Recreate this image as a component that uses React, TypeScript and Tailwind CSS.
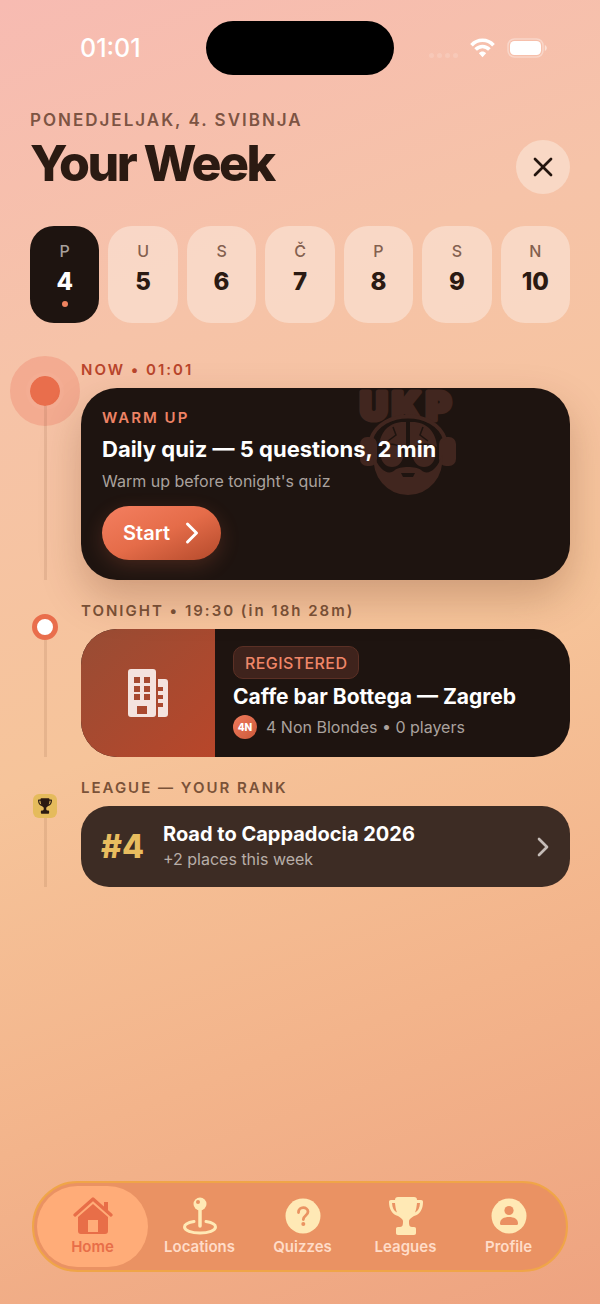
import type { ReactNode } from "react";
import { ChevronRight, X } from "lucide-react";

interface Day {
  letter: string;
  date:   number;
  name:   string;
}

const days: Day[] = [
  { letter: "P", date: 4,  name: "Ponedjeljak" },
  { letter: "U", date: 5,  name: "Utorak" },
  { letter: "S", date: 6,  name: "Srijeda" },
  { letter: "Č", date: 7,  name: "Četvrtak" },
  { letter: "P", date: 8,  name: "Petak" },
  { letter: "S", date: 9,  name: "Subota" },
  { letter: "N", date: 10, name: "Nedjelja" },
];

function StatusBar() {
  return (
    <div className="h-[105px] pt-[21px] grid grid-cols-[1fr_188px_1fr] items-start text-white">
      <div className="h-14 flex items-center pl-20 text-[25px] font-medium">01:01</div>
      <div className="h-[54px] rounded-full bg-black" />
      <div className="h-[54px] flex items-center justify-end gap-3 pr-[53px]">
        <div className="flex gap-[3px] pt-[14px]">
          {[1, 2, 3, 4].map((i) => (
            <span key={i} className="size-[5px] rounded-full bg-white/15" />
          ))}
        </div>
        <svg width="25" height="20" viewBox="0 0 25 20" fill="none" stroke="currentColor" strokeWidth="3.6">
          <path d="M1.5 7.2C7.5 0.6 17.5 0.6 23.5 7.2" />
          <path d="M5.6 11.6C9.5 7.5 15.5 7.5 19.4 11.6" />
          <path d="M8.9 15.2C10.9 13 14.1 13 16.1 15.2L12.5 19.2Z" fill="currentColor" stroke="none" />
        </svg>
        <svg width="40" height="20" viewBox="0 0 40 20" fill="none">
          <rect x="1" y="1" width="35" height="18" rx="6.5" stroke="#fff" strokeOpacity=".35" strokeWidth="1.5" />
          <rect x="3" y="3" width="31" height="14" rx="4.5" fill="#fff" />
          <path d="M37.8 7v6c1.2-.5 2-1.6 2-3s-.8-2.5-2-3Z" fill="#fff" fillOpacity=".5" />
        </svg>
      </div>
    </div>
  );
}

function Mascot() {
  return (
    <svg className="absolute top-0 right-[112px] overflow-visible" width="102" height="109" viewBox="17 13 102 109" fill="#41261f">
      <text
        x="21 53 87" y="45" fontSize="38" fontWeight="900" fontFamily="Inter, sans-serif"
        stroke="#41261f" strokeWidth="5" strokeLinejoin="round"
      >
        UKP
      </text>
      <circle cx="69" cy="76" r="34" fill="#1e1410" />
      <rect x="21" y="62" width="17" height="29" rx="7" />
      <rect x="100" y="62" width="17" height="29" rx="7" />
      <path d="M32 64C42 34 96 34 106 64" fill="none" stroke="#41261f" strokeWidth="4" />
      <path d="M67 47C51 46 41 56 40 72C50 66 60 68 67 76Z" />
      <path d="M71 47C87 46 97 56 98 72C88 66 78 68 71 76Z" />
      <path d="M54 52l3 8-8 6M84 52l-3 8 8 6" fill="none" stroke="#1e1410" strokeWidth="1.5" />
      <path
        fillRule="evenodd"
        d="M35 80C40 96 50 101 56 95C60 91 78 91 82 95C88 101 98 96 103 80A34 35 0 0 1 69 120A34 35 0 0 1 35 80ZM62 98l2 4h10l2-4Z"
      />
      <circle cx="53" cy="81" r="11" />
      <circle cx="85" cy="81" r="11" />
    </svg>
  );
}

function BuildingIcon() {
  return (
    <svg width="40" height="48" viewBox="0 0 40 48" fill="#f4e3de">
      <path
        fillRule="evenodd"
        d="M3 0h22a3 3 0 0 1 3 3v42a3 3 0 0 1-3 3H3a3 3 0 0 1-3-3V3a3 3 0 0 1 3-3ZM6 8v6h6V8ZM16 8v6h6V8ZM6 17v6h6v-6ZM16 17v6h6v-6ZM6 25v6h6v-6ZM16 25v6h6v-6ZM9 37v8h10v-8Z"
      />
      <path d="M30 10h7a3 3 0 0 1 3 3v32a3 3 0 0 1-3 3h-7V38h5v-4h-5v-4h5v-4h-5v-4h5v-4h-5Z" />
    </svg>
  );
}

function TrophyIcon({ className }: { className: string }) {
  return (
    <svg className={className} viewBox="0 0 34 38" fill="currentColor">
      <path
        fillRule="evenodd"
        d="M9 0h16c2 0 3 1 3 3h4c1.500 0 2 .7 2 2 0 7-3 12.500-9 14-2.500 2-5 3-5 5 0 3 0 6 3 6h2c1.500 0 2 .8 2 2v4c0 1-.7 2-2 2H9c-1.300 0-2-1-2-2v-4c0-1.200.5-2 2-2h2c3 0 3-3 3-6 0-2-2.500-3-5-5C3 17.500 0 12 0 5c0-1.300.5-2 2-2h4c0-2 1-3 3-3ZM3 6c.3 4.500 1.700 8 5 9.500C6.700 12.500 6.300 9 6 6ZM28 6c-.3 3-.7 6.500-2 9.500 3.300-1.500 4.700-5 5-9.500Z"
      />
    </svg>
  );
}

function HomeIcon() {
  return (
    <svg width="40" height="38" viewBox="0 0 40 38" fill="currentColor">
      <path d="M31 5h4v12l-4-4Z" />
      <path d="M2 18L20 2l18 16" fill="none" stroke="currentColor" strokeWidth="3.2" strokeLinecap="round" strokeLinejoin="round" />
      <path fillRule="evenodd" d="M20 7l15 13v14c0 2-1 3-3 3H8c-2 0-3-1-3-3V20ZM15 23v12h10V23Z" />
    </svg>
  );
}

function LocationIcon() {
  return (
    <svg width="34" height="38" viewBox="0 0 34 38" fill="none" stroke="currentColor">
      <path d="M11 24.500C5 25.500 1.500 27.500 1.500 30c0 3.500 7 6 15.500 6s15.500-2.500 15.500-6c0-2.500-3.500-4.500-9.500-5.500" strokeWidth="3" strokeLinecap="round" />
      <path d="M17 12v17" strokeWidth="3.5" strokeLinecap="round" />
      <circle cx="17" cy="7" r="6.5" fill="currentColor" stroke="none" />
      <circle cx="15" cy="5" r="2" fill="#ea9362" stroke="none" />
    </svg>
  );
}

function QuizIcon() {
  return (
    <svg width="36" height="38" viewBox="0 0 36 38" fill="currentColor">
      <circle cx="18" cy="19" r="17.5" />
      <path d="M13.500 15.500c0-6.500 9.500-6 9.500-.7 0 3.700-4.700 3.700-4.700 7.700" fill="none" stroke="#ea9362" strokeWidth="2.8" strokeLinecap="round" />
      <circle cx="18.3" cy="27" r="2" fill="#ea9362" />
    </svg>
  );
}

function ProfileIcon() {
  return (
    <svg width="36" height="38" viewBox="0 0 36 38" fill="currentColor">
      <circle cx="18" cy="19" r="17.5" />
      <circle cx="18" cy="13.5" r="4.6" fill="#ea9062" />
      <path d="M9 26.500c0-4.500 4-6.500 9-6.500s9 2 9 6.500c0 .8-.5 1.500-1.300 1.500H10.300C9.500 28 9 27.300 9 26.500Z" fill="#ea9062" />
    </svg>
  );
}

interface TimelineRowProps {
  label:    string;
  accent?:  boolean;
  node:     ReactNode;
  children: ReactNode;
}

function TimelineRow({ label, accent, node, children }: TimelineRowProps) {
  return (
    <section className="grid grid-cols-[30px_1fr] gap-x-[21px]">
      <div className="flex flex-col items-center">
        {node}
        <div className="w-[3px] flex-1 bg-[#7b4a32]/13" />
      </div>
      <div>
        <h2 className={`text-[15px] leading-5 mb-2 font-semibold tracking-[2px] ${accent ? "text-[#b9452c]" : "text-[#7a5238]"}`}>
          {label}
        </h2>
        {children}
      </div>
    </section>
  );
}

const navItems = [
  { label: "Locations", icon: <LocationIcon /> },
  { label: "Quizzes",   icon: <QuizIcon /> },
  { label: "Leagues",   icon: <TrophyIcon className="h-[38px] w-[34px]" /> },
  { label: "Profile",   icon: <ProfileIcon /> },
];

export default function App() {
  return (
    <div className="min-h-screen flex flex-col font-['Inter',sans-serif] bg-[linear-gradient(160deg,#f7bbb2_0%,#f6c3a8_25%,#f6c49a_52%,#f3b48b_76%,#eea380_100%)]">
      <StatusBar />

      <main className="px-[30px]">
        <header className="flex items-end justify-between">
          <div>
            <p className="text-[17px] leading-[30px] font-semibold tracking-[2px] text-[#7d5443]">PONEDJELJAK, 4. SVIBNJA</p>
            <h1 className="pb-[3px] text-[50px] leading-[56px] font-extrabold tracking-tighter text-[#2b1a12]">Your Week</h1>
          </div>
          <button aria-label="Close" className="size-[54px] rounded-full bg-[#f9d8c5] flex items-center justify-center text-[#24150e]">
            <X size={32} strokeWidth={2} />
          </button>
        </header>

        <div className="mt-8 grid grid-cols-7 gap-[9px]">
          {days.map((day, index) => (
            <button
              key={day.date}
              aria-label={`${day.name} ${day.date}`}
              className={`h-[97px] pt-[13px] rounded-[24px] flex flex-col items-center ${
                index === 0 ? "bg-[#1e1410] text-white" : "bg-[#fbe3d5]/65 text-[#2b1a12]"
              }`}
            >
              <span className={`text-base leading-6 font-medium ${index === 0 ? "text-[#a8a09c]" : "text-[#84604f]"}`}>
                {day.letter}
              </span>
              <span className="mt-1 text-2xl leading-[30px] font-extrabold">{day.date}</span>
              {index === 0 && <span className="mt-1 size-[6px] rounded-full bg-[#f0835f]" />}
            </button>
          ))}
        </div>

        <div className="mt-[37px] space-y-[21px]">
          <TimelineRow
            label="NOW • 01:01"
            accent
            node={
              <div className="mt-4 size-[30px] rounded-full bg-[#e96e4c] ring-4 ring-[#f7c6ab] outline-[20px] outline-[#ef8f76]/45" />
            }
          >
            <div className="relative rounded-[36px] bg-[#1e1410] px-[21px] py-5 shadow-[0_18px_40px_rgba(90,40,15,0.25)]">
              <Mascot />
              <div className="relative">
                <p className="text-[15px] leading-5 font-semibold tracking-[2px] text-[#ee8365]">WARM UP</p>
                <h3 className="mt-[6px] text-[22px] leading-[30px] font-bold text-white">Daily quiz — 5 questions, 2 min</h3>
                <p className="mt-[5px] text-base leading-6 text-[#aaa29e]">Warm up before tonight's quiz</p>
                <button className="mt-[13px] h-[54px] w-[119px] pl-[21px] rounded-full flex items-center gap-1 bg-linear-to-br from-[#f47f60] via-[#e56c49] to-[#b44a2b] text-xl font-semibold text-white shadow-[0_6px_20px_rgba(232,108,74,0.2)]">
                  Start
                  <ChevronRight size={36} strokeWidth={2} className="shrink-0" />
                </button>
              </div>
            </div>
          </TimelineRow>

          <TimelineRow
            label="TONIGHT • 19:30 (in 18h 28m)"
            node={<div className="mt-[13px] size-[26px] rounded-full border-[5px] border-[#e96e4c] bg-white" />}
          >
            <div className="flex overflow-hidden rounded-[36px] bg-[#1e1410]">
              <div className="w-[134px] shrink-0 flex items-center justify-center bg-linear-to-br from-[#984c34] to-[#b8462a]">
                <BuildingIcon />
              </div>
              <div className="min-w-0 px-[18px] pt-[17px] pb-[18px]">
                <span className="inline-flex h-[33px] items-center rounded-[10px] border border-[#5b3025] bg-[#3f231c] px-[11px] text-base font-medium tracking-wide text-[#f08769]">
                  REGISTERED
                </span>
                <h3 className="mt-1 text-[21px] leading-7 font-bold text-white">Caffe bar Bottega — Zagreb</h3>
                <p className="mt-1 flex items-center gap-[9px] text-base leading-6 text-[#aaa29e]">
                  <span className="size-6 rounded-full bg-linear-to-br from-[#f07b5c] to-[#cc593a] flex items-center justify-center text-[10px] font-extrabold text-white">
                    4N
                  </span>
                  4 Non Blondes • 0 players
                </p>
              </div>
            </div>
          </TimelineRow>

          <TimelineRow
            label="LEAGUE — YOUR RANK"
            node={
              <div className="mt-4 size-6 rounded-[6px] bg-[#e5bb5c] flex items-center justify-center text-[#2b1a12]">
                <TrophyIcon className="h-4 w-[14px]" />
              </div>
            }
          >
            <a href="#leagues" className="flex items-center rounded-[28px] bg-[#3d2c24] py-4 pl-5 pr-[11px]">
              <span className="w-[62px] text-[32px] leading-10 font-extrabold text-[#e8bd5f]">#4</span>
              <span className="flex-1">
                <span className="block text-xl leading-[25px] font-bold text-white">Road to Cappadocia 2026</span>
                <span className="block text-base leading-6 text-[#b8aea8]">+2 places this week</span>
              </span>
              <ChevronRight size={32} strokeWidth={2} className="text-[#c5bcb7]" />
            </a>
          </TimelineRow>
        </div>
      </main>

      <nav className="mt-auto mx-8 mb-8 flex rounded-full border-2 border-[#f0a548] bg-[#ea9263] py-[3px] pl-[3px] pr-[6px]">
        <a href="#home" aria-current="page" className="w-[111px] h-[81px] rounded-full bg-[#ffac78] flex flex-col items-center pt-[11px] text-[#e86e48]">
          <HomeIcon />
          <span className="mt-[2px] text-[15px] leading-5 font-semibold">Home</span>
        </a>
        {navItems.map((item) => (
          <a key={item.label} href={`#${item.label.toLowerCase()}`} className="flex-1 flex flex-col items-center pt-[11px] text-[#ffe9b5]">
            {item.icon}
            <span className="mt-[2px] text-[15px] leading-5 font-semibold text-[#ffdcc8]">{item.label}</span>
          </a>
        ))}
      </nav>
    </div>
  );
}
